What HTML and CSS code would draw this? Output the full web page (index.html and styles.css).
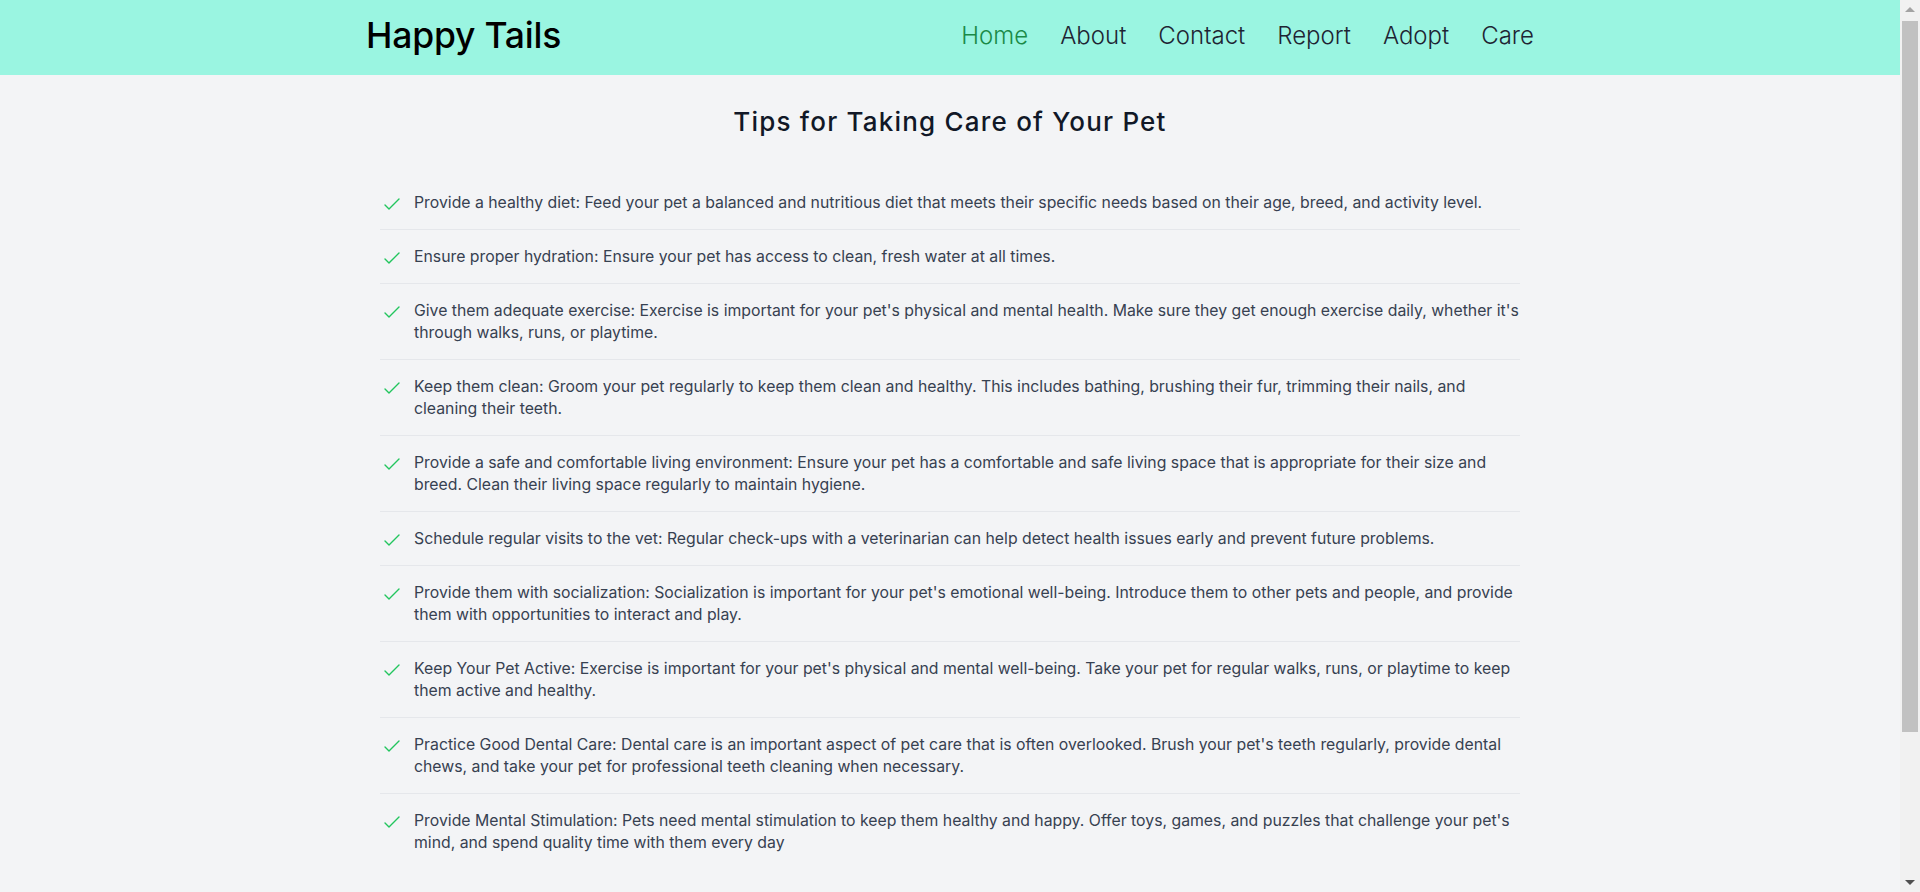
FILE: index.html
```html
<!DOCTYPE html>
<html lang="en">
<head>
<meta charset="utf-8">
<title>Happy Tails - Pet Care Tips</title>
<link rel="stylesheet" href="styles.css">
</head>
<body>
<header class="site-header">
  <div class="header-inner">
    <a class="brand" href="#">Happy Tails</a>
    <nav class="nav">
      <a class="nav-link active" href="#">Home</a>
      <a class="nav-link" href="#">About</a>
      <a class="nav-link" href="#">Contact</a>
      <a class="nav-link" href="#">Report</a>
      <a class="nav-link" href="#">Adopt</a>
      <a class="nav-link" href="#">Care</a>
    </nav>
  </div>
</header>
<main class="care">
  <h1 class="care-title">Tips for Taking Care of Your Pet</h1>
  <ul class="tips">
    <li class="tip"><svg class="check" viewBox="0 0 24 22"><path d="M5 13l4 4L19 7"/></svg><p class="tip-text">Provide a healthy diet: Feed your pet a balanced and nutritious diet that meets their specific needs based on their age, breed, and activity level.</p></li>
    <li class="tip"><svg class="check" viewBox="0 0 24 22"><path d="M5 13l4 4L19 7"/></svg><p class="tip-text">Ensure proper hydration: Ensure your pet has access to clean, fresh water at all times.</p></li>
    <li class="tip"><svg class="check" viewBox="0 0 24 22"><path d="M5 13l4 4L19 7"/></svg><p class="tip-text">Give them adequate exercise: Exercise is important for your pet's physical and mental health. Make sure they get enough exercise daily, whether it's through walks, runs, or playtime.</p></li>
    <li class="tip"><svg class="check" viewBox="0 0 24 22"><path d="M5 13l4 4L19 7"/></svg><p class="tip-text">Keep them clean: Groom your pet regularly to keep them clean and healthy. This includes bathing, brushing their fur, trimming their nails, and cleaning their teeth.</p></li>
    <li class="tip"><svg class="check" viewBox="0 0 24 22"><path d="M5 13l4 4L19 7"/></svg><p class="tip-text">Provide a safe and comfortable living environment: Ensure your pet has a comfortable and safe living space that is appropriate for their size and breed. Clean their living space regularly to maintain hygiene.</p></li>
    <li class="tip"><svg class="check" viewBox="0 0 24 22"><path d="M5 13l4 4L19 7"/></svg><p class="tip-text">Schedule regular visits to the vet: Regular check-ups with a veterinarian can help detect health issues early and prevent future problems.</p></li>
    <li class="tip"><svg class="check" viewBox="0 0 24 22"><path d="M5 13l4 4L19 7"/></svg><p class="tip-text">Provide them with socialization: Socialization is important for your pet's emotional well-being. Introduce them to other pets and people, and provide them with opportunities to interact and play.</p></li>
    <li class="tip"><svg class="check" viewBox="0 0 24 22"><path d="M5 13l4 4L19 7"/></svg><p class="tip-text">Keep Your Pet Active: Exercise is important for your pet's physical and mental well-being. Take your pet for regular walks, runs, or playtime to keep them active and healthy.</p></li>
    <li class="tip"><svg class="check" viewBox="0 0 24 22"><path d="M5 13l4 4L19 7"/></svg><p class="tip-text">Practice Good Dental Care: Dental care is an important aspect of pet care that is often overlooked. Brush your pet's teeth regularly, provide dental chews, and take your pet for professional teeth cleaning when necessary.</p></li>
    <li class="tip"><svg class="check" viewBox="0 0 24 22"><path d="M5 13l4 4L19 7"/></svg><p class="tip-text">Provide Mental Stimulation: Pets need mental stimulation to keep them healthy and happy. Offer toys, games, and puzzles that challenge your pet's mind, and spend quality time with them every day</p></li>
  </ul>
</main>
<div class="scrollbar" aria-hidden="true">
  <svg class="sb-arrow sb-up" viewBox="0 0 20 20"><path d="M5 12h10l-5-5z"/></svg>
  <div class="sb-thumb"></div>
  <svg class="sb-arrow sb-down" viewBox="0 0 20 20"><path d="M5 8h10l-5 5z"/></svg>
</div>
</body>
</html>
```
FILE: styles.css
```css
* { box-sizing: border-box; }
html, body { margin: 0; padding: 0; }
body {
  margin-right: 20px;
  background: #f3f4f6;
  font-family: "Inter", "Noto Sans", sans-serif;
  color: #374151;
}
a { text-decoration: none; }

.site-header {
  background: #9af5e1;
  height: 75px;
  display: flex;
  align-items: center;
}
.header-inner {
  width: 1200px;
  margin: 0 auto;
  padding: 0 16px 4px;
  display: flex;
  align-items: center;
  justify-content: space-between;
}
.brand {
  font-size: 35.5px;
  font-weight: 500;
  color: #000;
  letter-spacing: -0.2px;
}
.nav {
  display: flex;
  gap: 32px;
}
.nav-link {
  font-size: 24px;
  font-weight: 300;
  color: #1e2433;
}
.nav-link.active { color: #1a8a47; }

.care {
  width: 1140px;
  margin: 0 auto;
  padding: 31px 0 200px;
}
.care-title {
  margin: 0 0 38px;
  text-align: center;
  font-size: 26px;
  line-height: 32px;
  font-weight: 500;
  letter-spacing: 1.2px;
  color: #111827;
}
.tips {
  list-style: none;
  margin: 0;
  padding: 0;
}
.tip {
  display: flex;
  align-items: flex-start;
  gap: 10px;
  padding: 16px 0 15px;
  border-bottom: 1px solid #e5e7eb;
}
.tip:last-child { border-bottom: none; }
.check {
  flex: none;
  width: 24px;
  height: 22px;
  fill: none;
  stroke: #22c55e;
  stroke-width: 1.4;
  stroke-linecap: round;
  stroke-linejoin: round;
}
.tip-text {
  flex: 1;
  margin: 0 -5px 0 0;
  font-size: 15.8px;
  line-height: 22px;
  color: #374151;
}

/* browser scrollbar as seen in the screenshot */
.scrollbar {
  position: fixed;
  top: 0;
  right: 0;
  bottom: 0;
  width: 20px;
  background: #f1f1f1;
  display: flex;
  flex-direction: column;
  align-items: center;
}
.sb-arrow {
  flex: none;
  width: 20px;
  height: 20px;
}
.sb-up { fill: #a3a3a3; }
.sb-down { fill: #505050; margin-top: auto; }
.sb-thumb {
  width: 16px;
  height: 711px;
  margin-top: 1px;
  background: #c1c1c1;
}
```
